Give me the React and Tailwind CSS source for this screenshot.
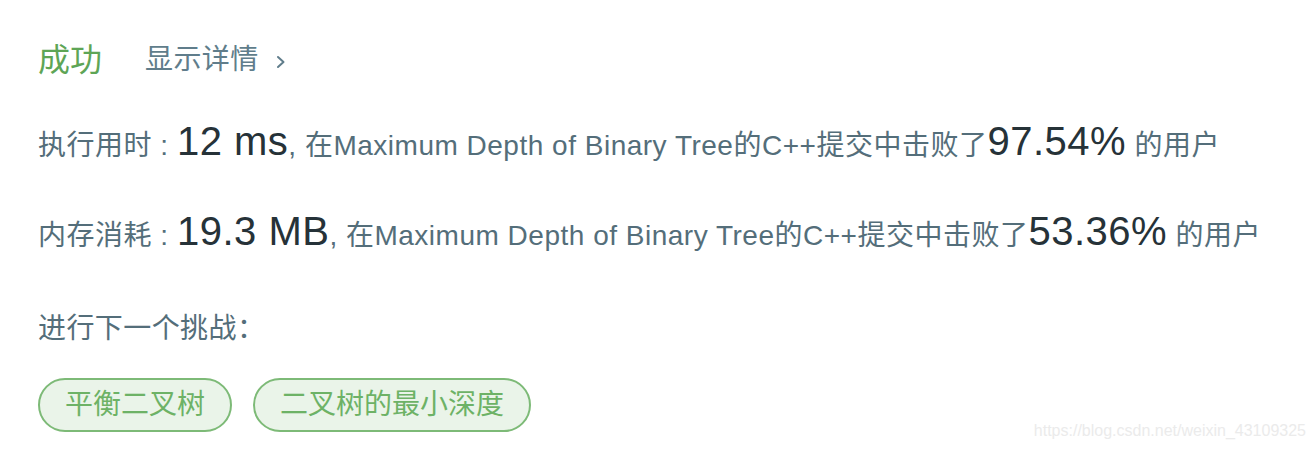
import React from 'react';

const font = { fontFamily: '"Liberation Sans", "Noto Sans CJK SC", sans-serif' };

const stats = [
  { label: '执行用时', value: '12 ms', percent: '97.54%' },
  { label: '内存消耗', value: '19.3 MB', percent: '53.36%' },
];

const nextProblems = ['平衡二叉树', '二叉树的最小深度'];

const StatLine = ({ label, value, percent }) => (
  <div className="h-[90px] leading-[48px] whitespace-nowrap text-[28px] tracking-[0.018em] text-[#546e7a]">
    <span>{label} : </span>
    <span className="text-[40px] text-[#263238]">{value}</span>
    <span>, 在Maximum Depth of Binary Tree的C++提交中击败了</span>
    <span className="text-[40px] text-[#263238]">{percent}</span>
    <span> 的用户</span>
  </div>
);

const App = () => {
  return (
    <div className="relative h-[452px] w-[1316px] overflow-hidden bg-white" style={font}>
      <div className="pl-[38px] pt-[40px]">
        <div className="flex h-[40px] items-center">
          <span className="text-[32px] text-[#5ea556]">成功</span>
          <button type="button" className="ml-[43px] flex items-center gap-[16px] text-[28px] tracking-[0.015em] text-[#607d8b]">
            显示详情
            <svg className="mt-[4px]" width="12" height="14" viewBox="0 0 12 14" fill="none">
              <path d="M3 2L8.5 7L3 12" stroke="#607d8b" strokeWidth="2" strokeLinecap="round" strokeLinejoin="round" />
            </svg>
          </button>
        </div>

        <div className="mt-[37px]">
          {stats.map((item) => (
            <StatLine key={item.label} {...item} />
          ))}
        </div>

        <p className="mt-[12px] text-[28px] leading-[40px] tracking-[0.015em] text-[#546e7a]">进行下一个挑战：</p>

        <div className="mt-[29px] flex gap-[21px]">
          {nextProblems.map((name) => (
            <button
              key={name}
              type="button"
              className="h-[54px] rounded-full border-2 border-[#7dba77] bg-[#eaf4e9] px-[25px] text-[28px] leading-none text-[#6db266]"
            >
              {name}
            </button>
          ))}
        </div>
      </div>

      <span className="absolute bottom-[9px] right-[10px] text-[16px] text-[#ebebeb]">
        https://blog.csdn.net/weixin_43109325
      </span>
    </div>
  );
};

export default App;
